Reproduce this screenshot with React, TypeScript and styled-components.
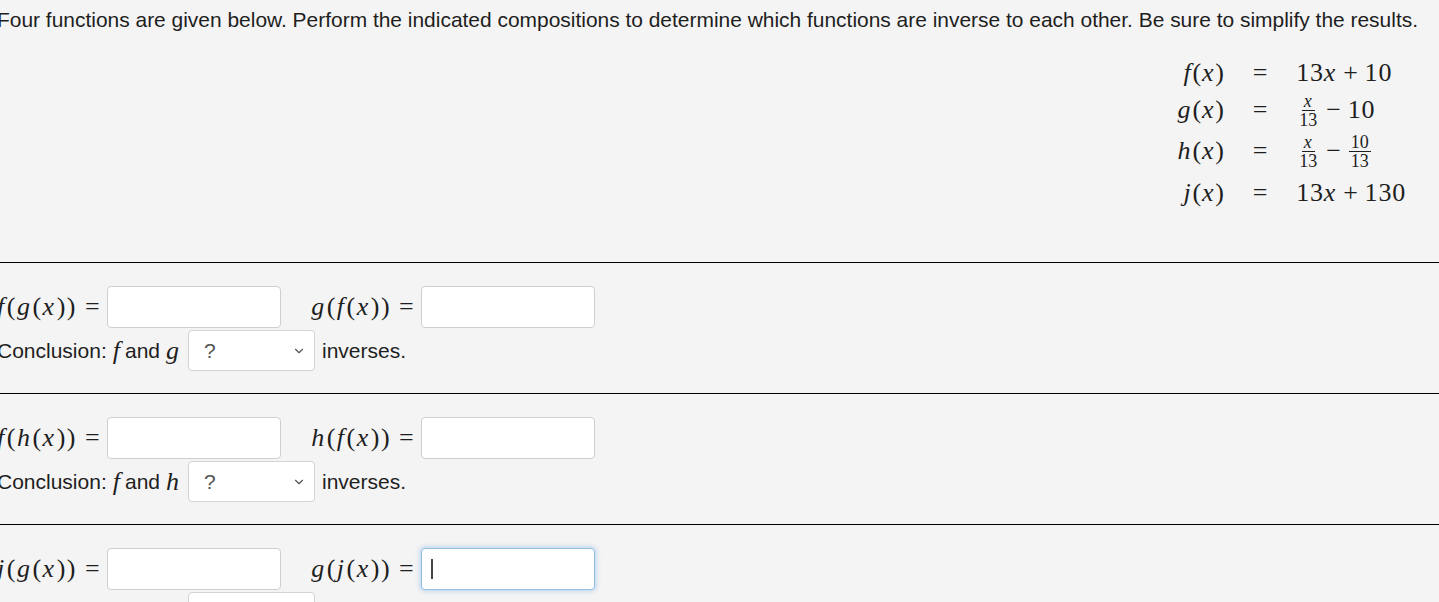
import React from 'react'
import styled, { createGlobalStyle } from 'styled-components'
import { ChevronDown } from 'lucide-react'

const GlobalStyle = createGlobalStyle`
  html, body {
    margin: 0;
    padding: 0;
    background: #f4f4f4;
    overflow: hidden;
  }
  body {
    font-family: "Liberation Sans", Arial, sans-serif;
    color: #1e1e1e;
  }
`

const Page = styled.div`
  margin-left: -3px;
  width: 1442px;
`

const Intro = styled.div`
  height: 262px;
  padding-top: 8px;
  box-sizing: border-box;
`

const Lead = styled.p`
  margin: 0;
  font-size: 20.95px;
  line-height: 24px;
  white-space: nowrap;
`

const MathBlock = styled.div`
  display: flex;
  justify-content: flex-end;
  padding-right: 33px;
  margin-top: 23px;
`

const MathGrid = styled.div`
  display: grid;
  grid-template-columns: auto auto auto;
  column-gap: 28px;
  align-items: center;
  font-family: "Liberation Serif", "Times New Roman", serif;
  font-size: 26px;
  letter-spacing: 0.8px;
`

const MathCell = styled.div<{ $align: 'left' | 'right' | 'center'; $h: number }>`
  height: ${({ $h }) => $h}px;
  display: flex;
  align-items: center;
  justify-content: ${({ $align }) =>
    $align === 'right' ? 'flex-end' : $align === 'center' ? 'center' : 'flex-start'};
  white-space: nowrap;
`

const V = styled.i`
  font-style: italic;
  padding-right: 1px;
`

const Frac = styled.span`
  display: inline-flex;
  flex-direction: column;
  align-items: center;
  font-size: 18px;
  line-height: 18px;
  letter-spacing: 0;
  margin: 0 1px;
`

const Num = styled.span`
  padding: 0 2px;
  border-bottom: 1px solid #1e1e1e;
`

const Den = styled.span`
  padding: 0 2px;
`

const Minus = styled.span`
  margin: 0 6px;
`

const Section = styled.section`
  border-top: 1px solid #000;
  height: 131px;
  box-sizing: border-box;
  padding-top: 23px;
`

const Row = styled.div`
  display: flex;
  align-items: center;
`

const Expr = styled.span<{ $gap?: number }>`
  font-family: "Liberation Serif", "Times New Roman", serif;
  font-size: 26px;
  letter-spacing: 1.5px;
  white-space: nowrap;
  margin-left: ${({ $gap }) => $gap ?? 0}px;
  margin-right: 6px;
`

const Eq = styled.span`
  margin-left: 8px;
`

const Field = styled.div<{ $focused?: boolean }>`
  width: 174px;
  height: 42px;
  box-sizing: border-box;
  background: #fff;
  border: 1px solid ${({ $focused }) => ($focused ? '#92c1e6' : '#cfcfcf')};
  border-radius: 4px;
  box-shadow: ${({ $focused }) => ($focused ? '0 0 5px 1px rgba(102, 165, 225, 0.45)' : 'none')};
  display: flex;
  align-items: center;
  padding-left: 9px;
`

const Caret = styled.span`
  width: 2px;
  height: 20px;
  background: #444;
`

const Conclusion = styled.div`
  display: flex;
  align-items: center;
  margin-top: 2px;
  font-size: 21px;
`

const Italic = styled.i`
  font-family: "Liberation Serif", "Times New Roman", serif;
  font-size: 26px;
  margin: 0 5px 0 6px;
`

const SelectWrap = styled.div`
  position: relative;
  width: 127px;
  height: 41px;
  margin: 0 7px 0 4px;
`

const Select = styled.select`
  appearance: none;
  width: 100%;
  height: 100%;
  box-sizing: border-box;
  background: #fff;
  border: 1px solid #d3d3d3;
  border-radius: 4px;
  padding-left: 15px;
  font-family: "Liberation Sans", Arial, sans-serif;
  font-size: 21px;
  color: #555;
`

const Chevron = styled(ChevronDown)`
  position: absolute;
  right: 9px;
  top: 14px;
  color: #555;
  pointer-events: none;
`

type Fn = 'f' | 'g' | 'h' | 'j'

interface Pair {
  a: Fn
  b: Fn
  focusSecond?: boolean
}

const pairs: Pair[] = [
  { a: 'f', b: 'g' },
  { a: 'f', b: 'h' },
  { a: 'j', b: 'g', focusSecond: true },
]

const Compose = ({ outer, inner }: { outer: Fn; inner: Fn }) => (
  <>
    <V>{outer}</V>(<V>{inner}</V>(<V>x</V>))<Eq>=</Eq>
  </>
)

const Definitions = () => (
  <MathBlock>
    <MathGrid>
      <MathCell $align="right" $h={36}>
        <V>f</V>(<V>x</V>)
      </MathCell>
      <MathCell $align="center" $h={36}>=</MathCell>
      <MathCell $align="left" $h={36}>
        13<V>x</V>
        <Minus>+</Minus>10
      </MathCell>

      <MathCell $align="right" $h={38}>
        <V>g</V>(<V>x</V>)
      </MathCell>
      <MathCell $align="center" $h={38}>=</MathCell>
      <MathCell $align="left" $h={38}>
        <Frac>
          <Num>
            <V>x</V>
          </Num>
          <Den>13</Den>
        </Frac>
        <Minus>−</Minus>10
      </MathCell>

      <MathCell $align="right" $h={44}>
        <V>h</V>(<V>x</V>)
      </MathCell>
      <MathCell $align="center" $h={44}>=</MathCell>
      <MathCell $align="left" $h={44}>
        <Frac>
          <Num>
            <V>x</V>
          </Num>
          <Den>13</Den>
        </Frac>
        <Minus>−</Minus>
        <Frac>
          <Num>10</Num>
          <Den>13</Den>
        </Frac>
      </MathCell>

      <MathCell $align="right" $h={40}>
        <V>j</V>(<V>x</V>)
      </MathCell>
      <MathCell $align="center" $h={40}>=</MathCell>
      <MathCell $align="left" $h={40}>
        13<V>x</V>
        <Minus>+</Minus>130
      </MathCell>
    </MathGrid>
  </MathBlock>
)

const PairSection = ({ pair }: { pair: Pair }) => (
  <Section>
    <Row>
      <Expr>
        <Compose outer={pair.a} inner={pair.b} />
      </Expr>
      <Field />
      <Expr $gap={30}>
        <Compose outer={pair.b} inner={pair.a} />
      </Expr>
      <Field $focused={pair.focusSecond}>{pair.focusSecond && <Caret />}</Field>
    </Row>
    <Conclusion>
      Conclusion:
      <Italic>{pair.a}</Italic>
      and
      <Italic>{pair.b}</Italic>
      <SelectWrap>
        <Select defaultValue="?">
          <option value="?">?</option>
          <option value="are">are</option>
          <option value="are not">are not</option>
        </Select>
        <Chevron size={14} strokeWidth={2} />
      </SelectWrap>
      inverses.
    </Conclusion>
  </Section>
)

export default function App() {
  return (
    <Page>
      <GlobalStyle />
      <Intro>
        <Lead>
          Four functions are given below. Perform the indicated compositions to determine which
          functions are inverse to each other. Be sure to simplify the results.
        </Lead>
        <Definitions />
      </Intro>
      {pairs.map((pair, i) => (
        <PairSection key={i} pair={pair} />
      ))}
    </Page>
  )
}
